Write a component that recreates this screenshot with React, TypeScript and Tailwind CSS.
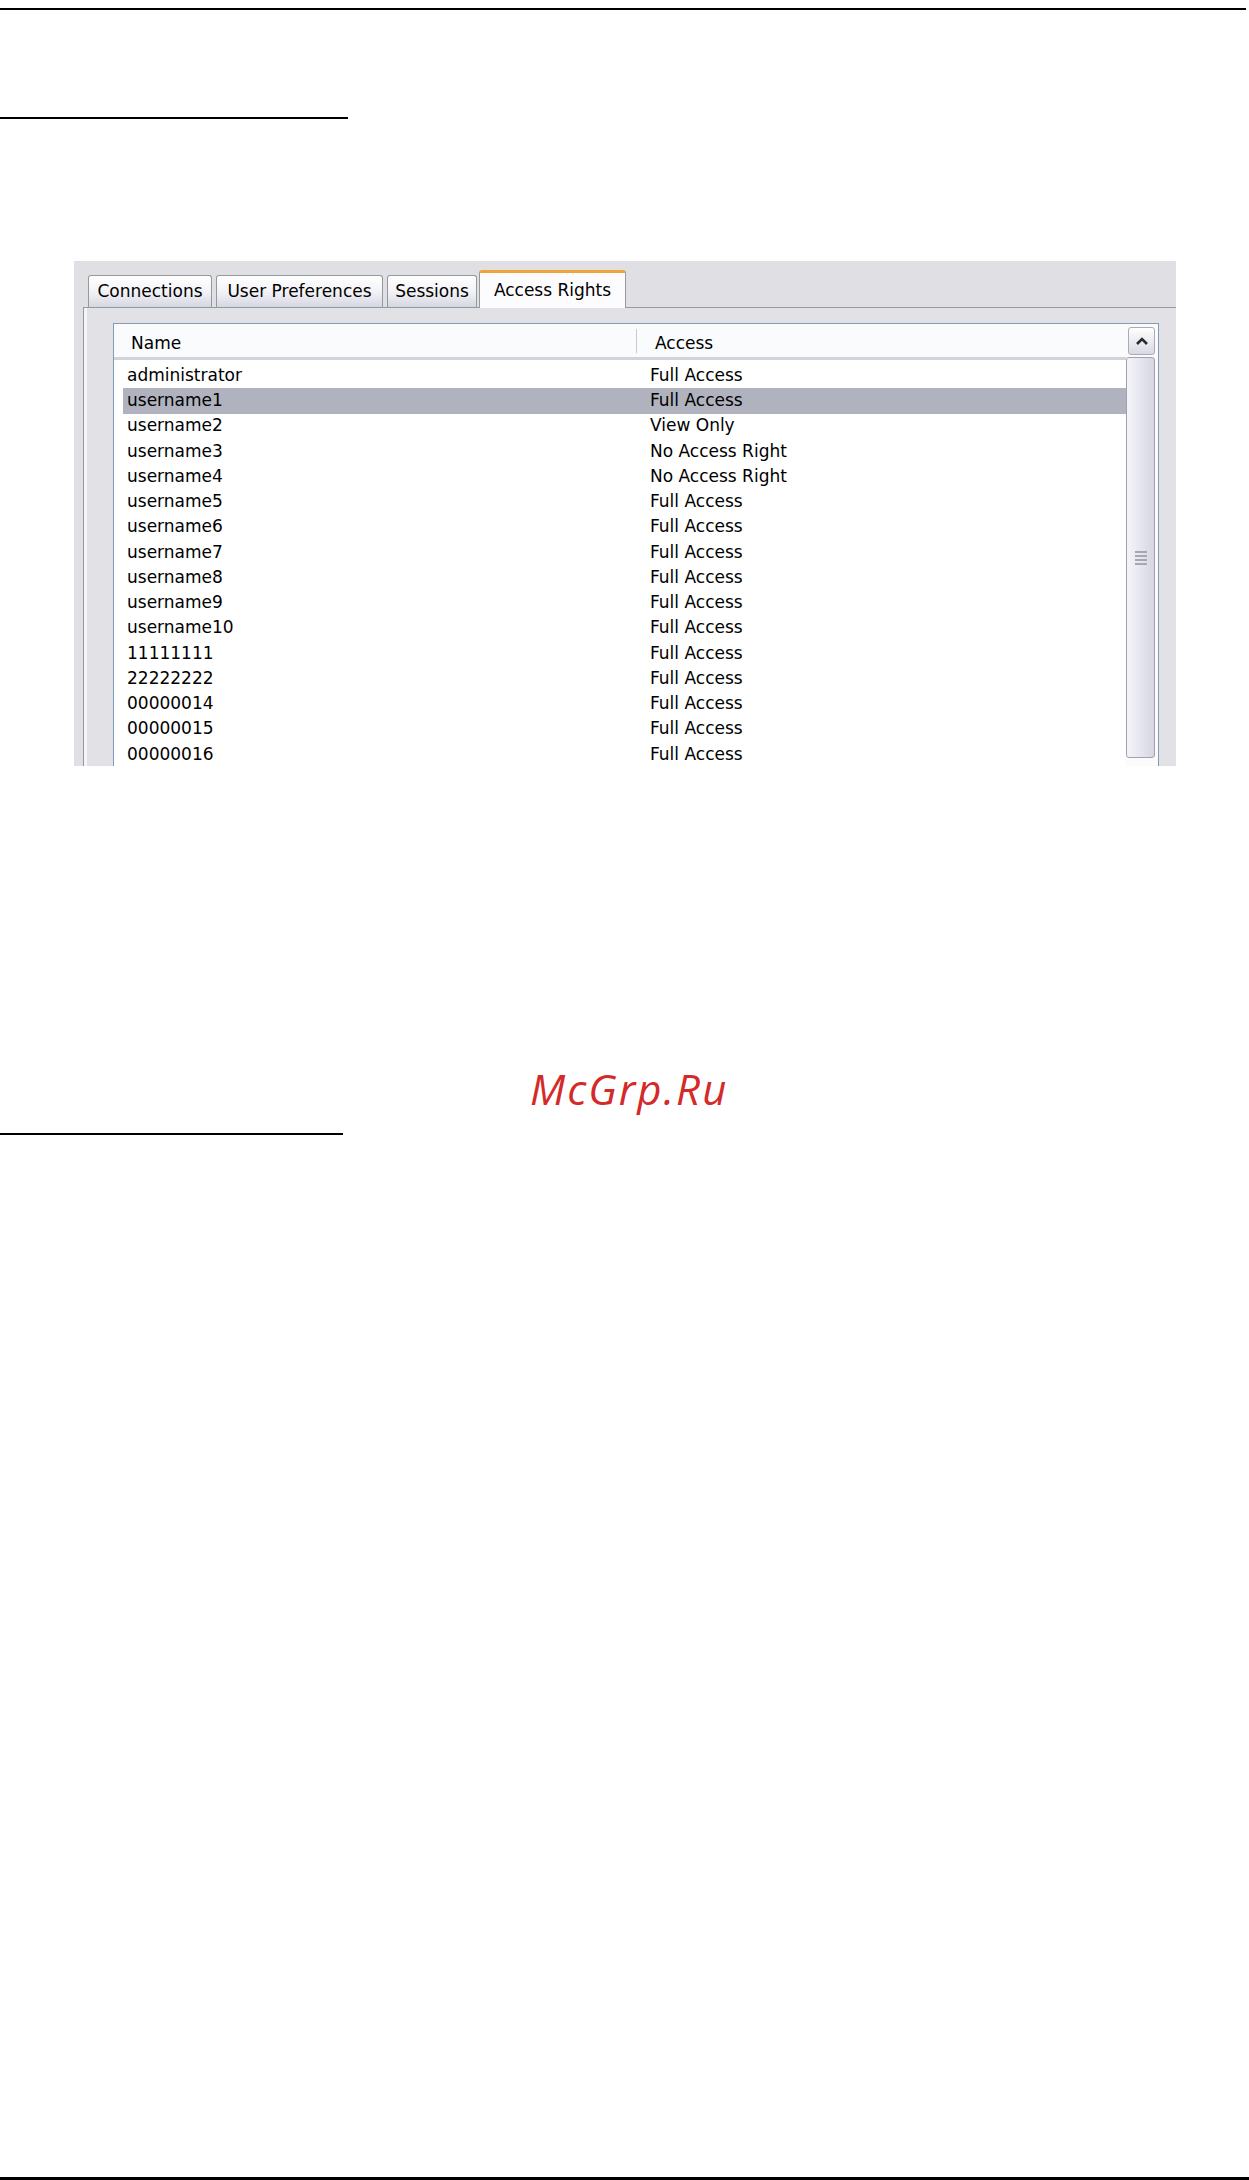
const users: [string, string][] = [
  ['administrator', 'Full Access'],
  ['username1', 'Full Access'],
  ['username2', 'View Only'],
  ['username3', 'No Access Right'],
  ['username4', 'No Access Right'],
  ['username5', 'Full Access'],
  ['username6', 'Full Access'],
  ['username7', 'Full Access'],
  ['username8', 'Full Access'],
  ['username9', 'Full Access'],
  ['username10', 'Full Access'],
  ['11111111', 'Full Access'],
  ['22222222', 'Full Access'],
  ['00000014', 'Full Access'],
  ['00000015', 'Full Access'],
  ['00000016', 'Full Access'],
];

const tabs = [
  { label: 'Connections', width: 'w-[124px]' },
  { label: 'User Preferences', width: 'w-[167px]' },
  { label: 'Sessions', width: 'w-[90px]' },
];

function Tab({ label, width }: { label: string; width: string }) {
  return (
    <div
      className={`${width} h-[32px] mr-[4px] flex items-center justify-center rounded-t-[3px] border border-b-0 border-[#919b9c] bg-gradient-to-b from-[#ffffff] via-[#f3f3f7] to-[#d6d6e2] text-[17px] text-black`}
    >
      {label}
    </div>
  );
}

function ScrollBar() {
  return (
    <div className="w-[32px] shrink-0 flex flex-col bg-[#fbfbfc] pr-[3px]">
      <div className="ml-[2px] mt-[3px] h-[28px] shrink-0 flex items-center justify-center rounded-[3px] border border-[#a9abbc] bg-gradient-to-b from-[#ffffff] to-[#d9d9e5]">
        <svg width="14" height="10" viewBox="0 0 14 10">
          <polyline points="2,8 7,3 12,8" fill="none" stroke="#2b2b2b" strokeWidth="2.6" />
        </svg>
      </div>
      <div className="mt-[2px] h-[401px] shrink-0 flex items-center justify-center rounded-[3px] border border-[#a1a1ad] bg-gradient-to-r from-[#f4f4f8] via-[#e6e6ef] to-[#d6d6e2]">
        <div className="flex flex-col gap-[2px]">
          <div className="w-[12px] h-[2px] bg-[#a6a6b4]" />
          <div className="w-[12px] h-[2px] bg-[#a6a6b4]" />
          <div className="w-[12px] h-[2px] bg-[#a6a6b4]" />
          <div className="w-[12px] h-[2px] bg-[#a6a6b4]" />
        </div>
      </div>
    </div>
  );
}

export default function App() {
  return (
    <div className="w-[1249px] h-[2180px] bg-white flex flex-col font-['DejaVu_Sans',sans-serif]">
      <div className="mt-[8px] w-[1246px] h-[2px] bg-black" />
      <div className="mt-[107px] w-[348px] h-[2px] bg-black" />

      <div className="mt-[142px] ml-[74px] w-[1102px] h-[505px] shrink-0 bg-[#e0dfe3] overflow-hidden flex flex-col">
        <div className="h-[46px] shrink-0 flex items-end pl-[14px] relative z-10">
          {tabs.map((t) => (
            <Tab key={t.label} label={t.label} width={t.width} />
          ))}
          <div className="-ml-[2px] w-[147px] h-[38px] -mb-px flex items-center justify-center rounded-t-[3px] border border-b-0 border-[#919b9c] border-t-[3px] border-t-[#f2a23a] bg-[#fcfcfe] text-[17px] text-black">
            Access Rights
          </div>
        </div>

        <div className="ml-[9px] flex-1 min-h-0 border-t border-l border-[#919b9c] bg-[#e2e1e6] pl-[29px] pt-[15px] shadow-[inset_3px_0_0_#f4f4f6]">
          <div className="w-[1046px] h-[470px] border border-[#7f9db9] bg-white flex">
            <div className="flex-1 flex flex-col">
              <div className="h-[36px] shrink-0 flex items-center bg-[#fafbfd] border-b-[3px] border-[#d2d2dc] text-[17px] text-black">
                <div className="w-[523px] pl-[17px] pt-[6px] border-r border-[#c8c8cf] h-[24px] flex items-center">
                  Name
                </div>
                <div className="pl-[18px] pt-[6px]">Access</div>
              </div>
              <div className="pt-[3px] flex flex-col">
                {users.map(([name, access], i) => (
                  <div
                    key={name}
                    className={`ml-[9px] h-[25.25px] shrink-0 pl-[4px] flex items-center text-[17px] text-black ${
                      i === 1 ? 'bg-[#b0b3be]' : ''
                    }`}
                  >
                    <span className="w-[523px]">{name}</span>
                    <span>{access}</span>
                  </div>
                ))}
              </div>
            </div>
            <ScrollBar />
          </div>
        </div>
      </div>

      <div className="mt-[302px] ml-[530px] h-[42px] text-[42px] leading-[42px] italic tracking-[2px] text-[#d42a2a] font-['Open_Sans',sans-serif]">
        McGrp.Ru
      </div>
      <div className="mt-[23px] w-[343px] h-[2px] bg-black" />
      <div className="mt-[1042px] w-[1249px] h-[3px] bg-black" />
    </div>
  );
}
